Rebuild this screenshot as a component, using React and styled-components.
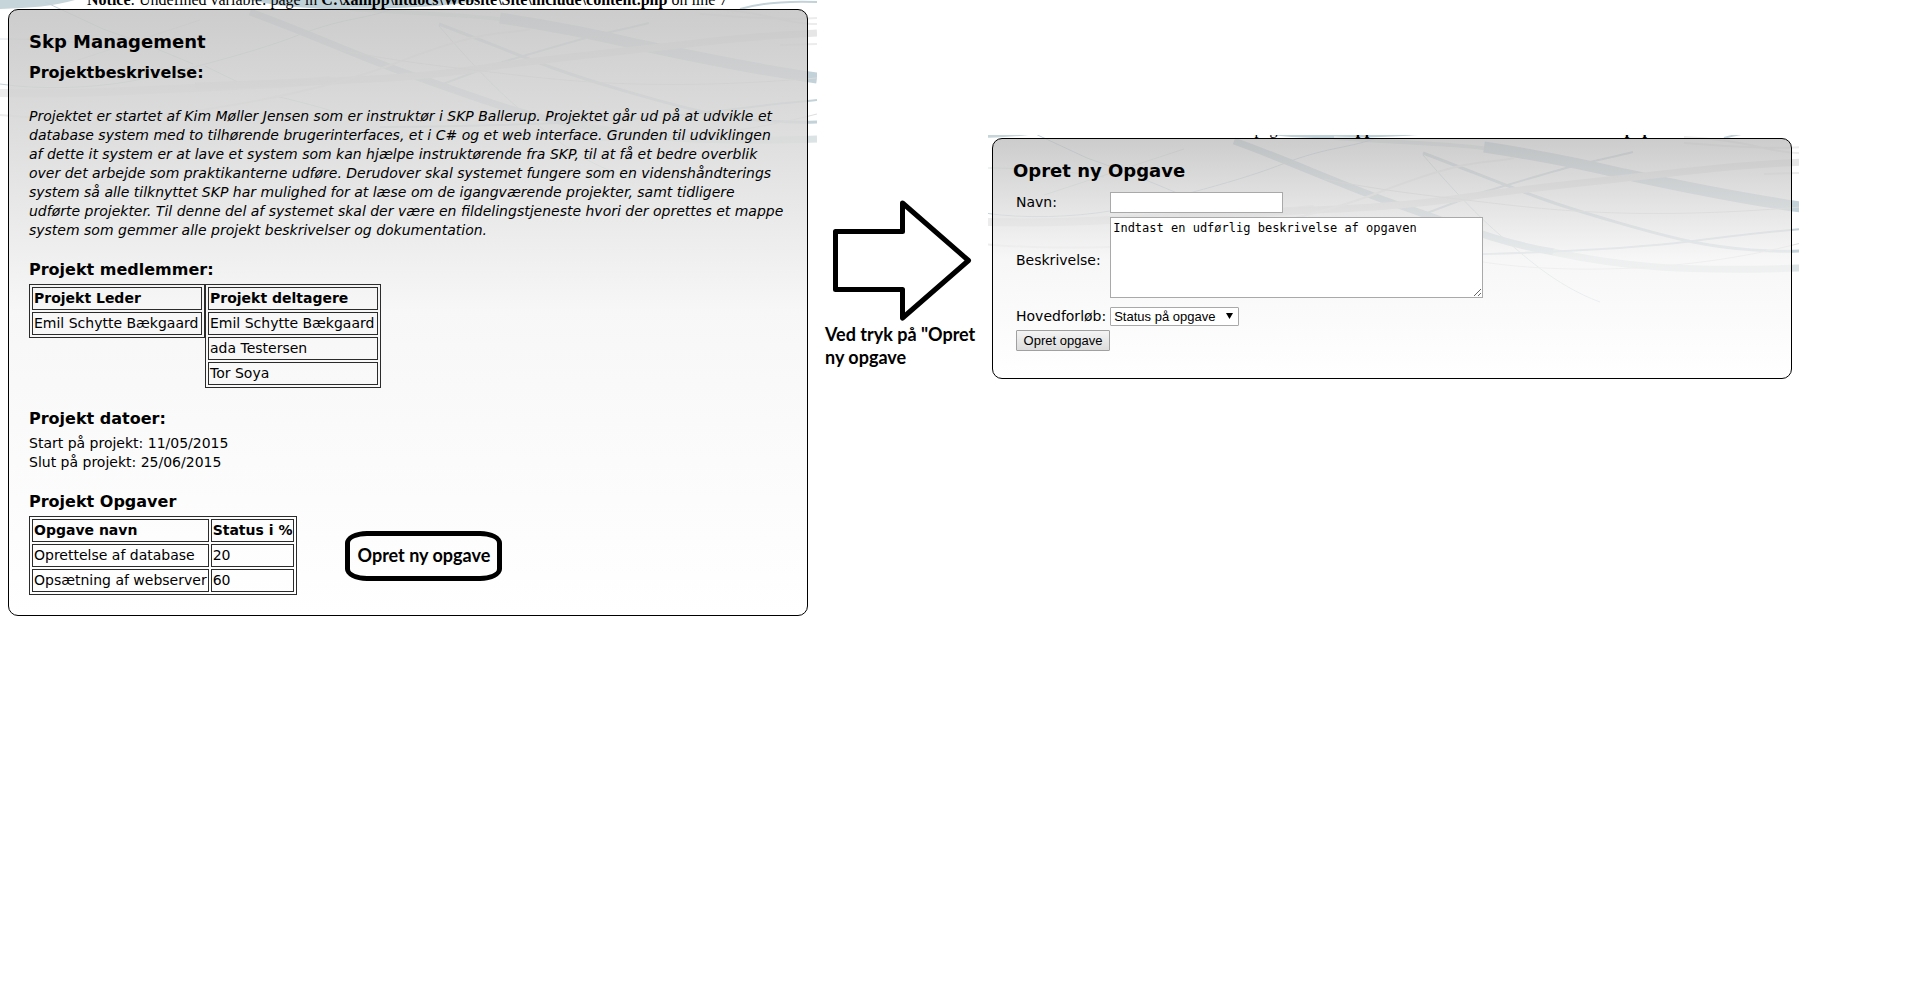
import React from "react";
import styled, { createGlobalStyle } from "styled-components";

const Global = createGlobalStyle`
  *, *::before, *::after { box-sizing: border-box; }
  body { margin: 0; background: #fff; color: #000; font: 14px/19px "DejaVu Sans", Verdana, sans-serif; }
`;

const Page = styled.div`
  display: grid;
  grid-template-columns: 817fr 171fr 811fr 115fr;
  align-items: start;
`;

const Pane = styled.section`
  position: relative;
  overflow: hidden;
  margin-top: ${(p) => p.$top}px;
  padding: 0 ${(p) => p.$right}px 0 ${(p) => p.$left}px;
`;

const Backdrop = styled.svg`
  position: absolute;
  top: ${(p) => p.$y}px;
  left: ${(p) => p.$x}px;
`;

const NoticeStrip = styled.div`
  position: relative;
  display: flex;
  align-items: flex-end;
  height: ${(p) => p.$height}px;
  padding-left: 79px;
  overflow: hidden;
  white-space: nowrap;
  font: 16px/18px "Liberation Serif", "Times New Roman", serif;
`;

const Panel = styled.div`
  position: relative;
  padding: 16px 20px 20px;
  border: 1px solid #000;
  border-radius: 10px;
  background: ${(p) =>
    p.$sheer
      ? "linear-gradient(rgba(187, 187, 187, 0.75), rgba(244, 244, 244, 0.75) 50%, rgba(255, 255, 255, 0.75))"
      : "linear-gradient(rgba(197, 197, 197, 0.87), rgba(246, 246, 246, 0.87) 50%, rgba(255, 255, 255, 0.87))"};
`;

const Title = styled.h1`
  margin: 0 0 1px;
  font-size: 18px;
  line-height: 31px;
`;

const Heading = styled.h2`
  margin: 0;
  font-size: 16px;
  line-height: 29px;
`;

const Description = styled.p`
  margin: 20px 0 15px;
  font-style: italic;
  white-space: nowrap;
`;

const Row = styled.div`
  display: flex;
  align-items: ${(p) => p.$align || "flex-start"};
  gap: ${(p) => p.$gap || 0}px;
  margin-bottom: ${(p) => p.$after || 0}px;
`;

const DataTable = styled.table`
  min-width: 176px;
  border: 1px solid #2b2b2b;
  border-spacing: 2px;
  white-space: nowrap;
  th, td { height: 23px; padding: 1px; border: 1px solid #2b2b2b; text-align: left; }
`;

const Dates = styled.p`
  margin: 1px 0 15px;
`;

const OvalButton = styled.button`
  width: 157px;
  height: 50px;
  padding: 0;
  border: 5px solid #000;
  border-radius: 22px / 12px;
  background: transparent;
  color: #000;
  font: bold 18px/23px Lato, sans-serif;
`;

const Step = styled.aside`
  padding: 200px 0 0 8px;
  font: bold 18px/23px Lato, sans-serif;
  white-space: nowrap;
  svg { display: block; }
  p { margin: 1px 0 0; }
`;

const FormTable = styled.table`
  margin: 3px 0 4px;
  border-spacing: 2px;
  td { padding: 1px; }
`;

const TextBox = styled.input`
  display: block;
  width: 173px;
  height: 21px;
  padding: 1px;
  border: 1px solid #a9a9a9;
  background: #fff;
`;

const TextArea = styled.textarea`
  display: block;
  width: 373px;
  height: 81px;
  margin-bottom: 5px;
  padding: 2px;
  border: 1px solid #a9a9a9;
  background: #fff;
  font: 12px/17px "DejaVu Sans Mono", monospace;
`;

const SelectBox = styled.div`
  position: relative;
  width: 129px;
  svg { position: absolute; top: 6px; right: 6px; pointer-events: none; }
`;

const Select = styled.select`
  display: block;
  appearance: none;
  width: 100%;
  height: 19px;
  padding: 0 3px;
  border: 1px solid #a9a9a9;
  border-radius: 1px;
  background: #fff;
  color: #000;
  font: 13px/17px "Liberation Sans", Arial, sans-serif;
`;

const SubmitButton = styled.button`
  display: block;
  height: 21px;
  width: 94px;
  padding: 0;
  border: 1px solid #a0a0a0;
  border-radius: 1px;
  background: linear-gradient(#f4f4f4, #dcdcdc);
  color: #000;
  font: 13px/17px "Liberation Sans", Arial, sans-serif;
`;

const Waves = ({ x, y }) => (
  <Backdrop $x={x} $y={y} width="817" height="200" viewBox="0 0 817 200" fill="none" aria-hidden="true">
    <g stroke="#c3d2d8">
      <path d="M0 0H75C55 6 30 8 0 9Z" fill="#c6d5da" stroke="none" />
      <path d="M250 0H480C450 6 410 9 330 9C300 8 270 5 250 0Z" fill="#bfd0d7" stroke="none" />
      <path d="M350 9C420 14 470 14 530 23" strokeWidth="4" stroke="#dfe6e8" />
      <path d="M500 18C540 24 590 33 640 45C700 58 760 70 817 78" strokeWidth="11" />
      <path d="M250 12C303 31 346 51 400 71C480 99 520 115 570 123" strokeWidth="7" />
      <path d="M569 123C640 138 700 143 817 139" strokeWidth="7" stroke="#dce3e5" />
      <path d="M439 24C489 43 520 56 556 69S670 105 709 113S790 123 817 122" strokeWidth="3" />
      <path d="M380 127C500 126 630 122 709 112S790 103 817 100" strokeWidth="2" />
      <path d="M439 26C470 62 495 88 516 106S570 156 616 173" strokeWidth="1" />
      <path d="M443 84L496 64C530 54 560 45 586 38S630 28 649 23" strokeWidth="2" />
      <path d="M0 84C40 90 90 88 126 82S250 54 296 36S360 20 390 10" strokeWidth="1" />
      <path d="M45 2L103 29C140 42 160 50 193 64M205 66L246 86M275 96C310 104 330 110 360 120" strokeWidth="1" />
      <path d="M740 9C760 3 790 1 817 2" strokeWidth="2" />
    </g>
    <g stroke="#ececec">
      <path d="M0 93C50 94 90 93 126 91S270 86 330 80" strokeWidth="8" />
      <path d="M195 86C300 82 396 81 476 69S629 51 696 43S790 35 817 33" strokeWidth="7" stroke="#e6e6e6" />
      <path d="M0 115C40 119 90 119 126 118S300 100 396 63S500 36 530 29" strokeWidth="2" />
      <path d="M340 50C400 62 440 66 499 73S650 92 817 78" strokeWidth="1" stroke="#dadada" />
      <path d="M499 133C563 143 690 147 817 114" strokeWidth="1" stroke="#dedede" />
      <path d="M0 39C50 39 80 42 120 48M60 66L200 20" strokeWidth="1" stroke="#dde3e5" />
      <path d="M700 14C750 18 790 20 817 18M700 8C760 10 790 25 817 24M780 45L817 44" strokeWidth="2" />
    </g>
  </Backdrop>
);

const Notice = ({ height }) => (
  <NoticeStrip $height={height}>
    <span>
      <b>Notice</b>: Undefined variable: page in <b>C:\xampp\htdocs\Website\Site\include\content.php</b> on line 7
    </span>
  </NoticeStrip>
);

export default function App() {
  return (
    <>
      <Global />
      <Page>
        <Pane $top={0} $left={8} $right={9}>
          <Waves x={0} y={0} />
          <Notice height={9} />
          <Panel>
            <Title>Skp Management</Title>
            <Heading>Projektbeskrivelse:</Heading>
            <Description>
              Projektet er startet af Kim Møller Jensen som er instruktør i SKP Ballerup. Projektet går ud på at udvikle et<br />
              database system med to tilhørende brugerinterfaces, et i C# og et web interface. Grunden til udviklingen<br />
              af dette it system er at lave et system som kan hjælpe instruktørende fra SKP, til at få et bedre overblik<br />
              over det arbejde som praktikanterne udføre. Derudover skal systemet fungere som en videnshåndterings<br />
              system så alle tilknyttet SKP har mulighed for at læse om de igangværende projekter, samt tidligere<br />
              udførte projekter. Til denne del af systemet skal der være en fildelingstjeneste hvori der oprettes et mappe<br />
              system som gemmer alle projekt beskrivelser og dokumentation.
            </Description>
            <Heading>Projekt medlemmer:</Heading>
            <Row $after={16}>
              <DataTable>
                <thead><tr><th>Projekt Leder</th></tr></thead>
                <tbody><tr><td>Emil Schytte Bækgaard</td></tr></tbody>
              </DataTable>
              <DataTable>
                <thead><tr><th>Projekt deltagere</th></tr></thead>
                <tbody>
                  <tr><td>Emil Schytte Bækgaard</td></tr>
                  <tr><td>ada Testersen</td></tr>
                  <tr><td>Tor Soya</td></tr>
                </tbody>
              </DataTable>
            </Row>
            <Heading>Projekt datoer:</Heading>
            <Dates>Start på projekt: 11/05/2015<br />Slut på projekt: 25/06/2015</Dates>
            <Heading>Projekt Opgaver</Heading>
            <Row $align="center" $gap={48}>
              <DataTable>
                <thead><tr><th>Opgave navn</th><th>Status i %</th></tr></thead>
                <tbody>
                  <tr><td>Oprettelse af database</td><td>20</td></tr>
                  <tr><td>Opsætning af webserver</td><td>60</td></tr>
                </tbody>
              </DataTable>
              <OvalButton type="button">Opret ny opgave</OvalButton>
            </Row>
          </Panel>
        </Pane>
        <Step>
          <svg width="150" height="122" viewBox="825 200 150 122" aria-hidden="true">
            <path d="M835.5 231.5H902.5V203L968.5 260.5L902.5 318V289.5H835.5Z" fill="#fff" stroke="#000" strokeWidth="5" strokeLinejoin="round" />
          </svg>
          <p>Ved tryk på "Opret<br />ny opgave</p>
        </Step>
        <Pane $top={135} $left={4} $right={7}>
          <Waves x={-4} y={-6} />
          <Notice height={3} />
          <Panel as="form" $sheer>
            <Title>Opret ny Opgave</Title>
            <FormTable>
              <tbody>
                <tr><td><label htmlFor="navn">Navn:</label></td><td><TextBox id="navn" type="text" /></td></tr>
                <tr><td><label htmlFor="beskrivelse">Beskrivelse:</label></td><td><TextArea id="beskrivelse" defaultValue="Indtast en udførlig beskrivelse af opgaven" /></td></tr>
                <tr>
                  <td><label htmlFor="hovedforloeb">Hovedforløb:</label></td>
                  <td>
                    <SelectBox>
                      <Select id="hovedforloeb"><option>Status på opgave</option></Select>
                      <svg width="7" height="6" viewBox="0 0 7 6" aria-hidden="true"><path d="M0 0H7L3.5 6Z" /></svg>
                    </SelectBox>
                  </td>
                </tr>
                <tr><td colSpan={2}><SubmitButton type="button">Opret opgave</SubmitButton></td></tr>
              </tbody>
            </FormTable>
          </Panel>
        </Pane>
      </Page>
    </>
  );
}
